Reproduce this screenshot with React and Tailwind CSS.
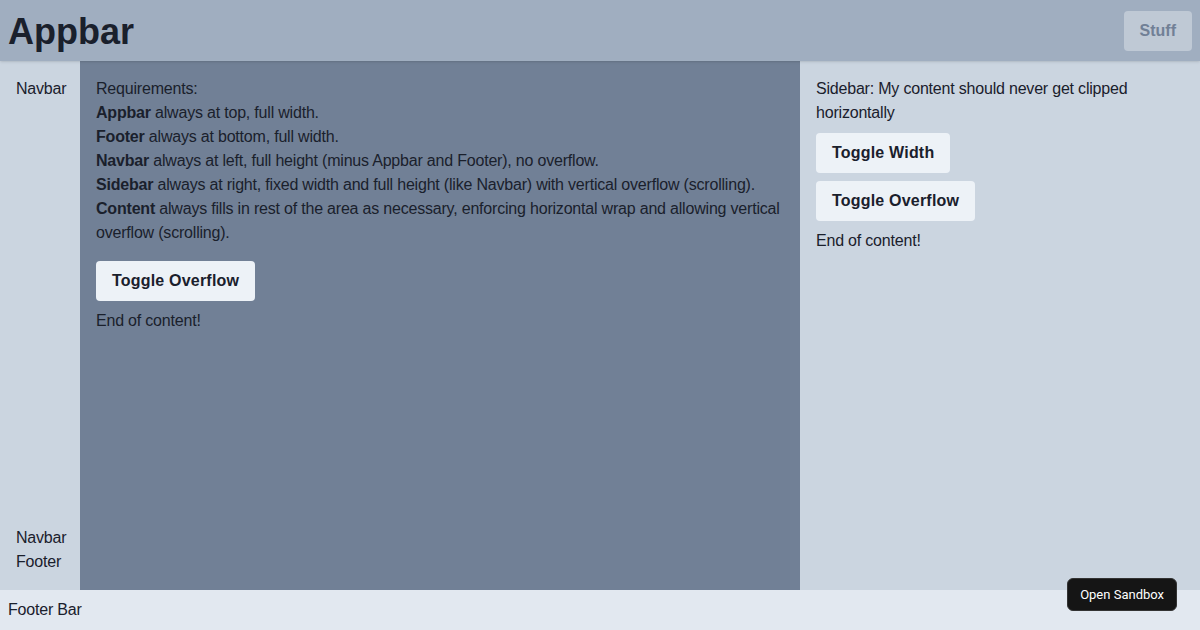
import React, { useState } from "react";

export default function App() {
  const [wide, setWide] = useState(false);
  const [overflow, setOverflow] = useState(false);
  const [sideOverflow, setSideOverflow] = useState(false);

  return (
    <div className="h-screen flex flex-col text-[#1a202c] font-['Liberation_Sans',Arial,sans-serif] text-base leading-6 tracking-[-0.2px] relative">
      {/* Appbar */}
      <div className="h-[61px] shrink-0 bg-[#a0aec0] flex items-center justify-between px-2 shadow-sm z-10">
        <h1 className="text-4xl font-bold tracking-normal pt-[3px]">Appbar</h1>
        <button className="h-10 px-4 rounded bg-[#bfc9d5] text-[#718096] font-bold tracking-normal">Stuff</button>
      </div>

      <div className="flex-1 flex min-h-0">
        {/* Navbar */}
        <div className="w-20 shrink-0 bg-[#cbd5e0] p-4 flex flex-col justify-between overflow-hidden">
          <div>Navbar</div>
          <div>
            <div>Navbar</div>
            <div>Footer</div>
          </div>
        </div>

        {/* Content */}
        <div className="flex-1 min-w-0 bg-[#718096] p-4 overflow-y-auto">
          <div>Requirements:</div>
          <div><b>Appbar</b> always at top, full width.</div>
          <div><b>Footer</b> always at bottom, full width.</div>
          <div><b>Navbar</b> always at left, full height (minus Appbar and Footer), no overflow.</div>
          <div><b>Sidebar</b> always at right, fixed width and full height (like Navbar) with vertical overflow (scrolling).</div>
          <div>
            <b>Content</b> always fills in rest of the area as necessary, enforcing horizontal wrap and allowing vertical overflow (scrolling).
          </div>
          <button
            onClick={() => setOverflow(!overflow)}
            className="mt-4 mb-2 h-10 px-4 rounded bg-[#edf2f7] font-bold tracking-[0.2px]"
          >
            Toggle Overflow
          </button>
          {overflow && <div className="h-[1000px]"></div>}
          <div>End of content!</div>
        </div>

        {/* Sidebar */}
        <div className={(wide ? "w-[500px]" : "w-[400px]") + " shrink-0 bg-[#cbd5e0] p-4 overflow-y-auto"}>
          <div>Sidebar: My content should never get clipped horizontally</div>
          <button onClick={() => setWide(!wide)} className="block my-2 h-10 px-4 rounded bg-[#edf2f7] font-bold tracking-[0.2px]">
            Toggle Width
          </button>
          <button onClick={() => setSideOverflow(!sideOverflow)} className="block my-2 h-10 px-4 rounded bg-[#edf2f7] font-bold tracking-[0.2px]">
            Toggle Overflow
          </button>
          {sideOverflow && <div className="h-[1000px]"></div>}
          <div>End of content!</div>
        </div>
      </div>

      {/* Footer */}
      <div className="h-10 shrink-0 bg-[#e2e8f0] px-2 flex items-center">Footer Bar</div>

      <button className="absolute right-[23px] bottom-[19px] h-[33px] px-3 rounded-md bg-[#151515] border border-[#333] text-[13px] text-white tracking-normal font-['Roboto',sans-serif]">
        Open Sandbox
      </button>
    </div>
  );
}
